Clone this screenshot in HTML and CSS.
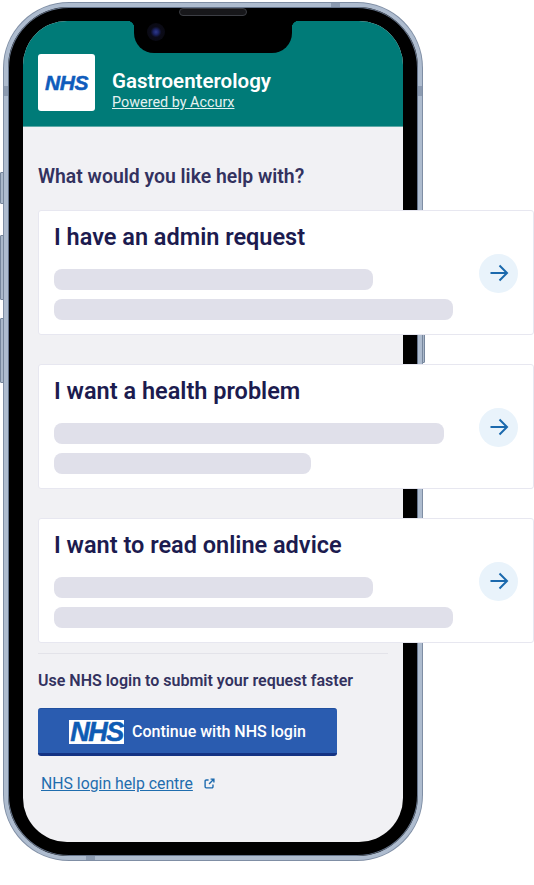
FILE: index.html
```html
<!DOCTYPE html>
<html lang="en">
<head>
  <meta charset="UTF-8">
  <meta name="viewport" content="width=device-width, initial-scale=1.0">
  <title>Gastroenterology</title>
  <link rel="stylesheet" href="styles.css">
</head>
<body>
  <div class="phone">
    <span class="side-btn mute"></span>
    <span class="side-btn vol-up"></span>
    <span class="side-btn vol-down"></span>
    <span class="side-btn power"></span>
    <span class="band band-top"></span>
    <span class="band band-bottom"></span>
    <span class="band band-left"></span>
    <span class="band band-right"></span>
    <span class="speaker"></span>
    <div class="notch"><span class="camera"></span></div>

    <div class="screen">
      <header class="top">
        <div class="logo-box"><span class="nhs-word">NHS</span></div>
        <div class="top-text">
          <h1>Gastroenterology</h1>
          <a class="powered" href="#">Powered by Accurx</a>
        </div>
      </header>

      <main class="content">
        <h2>What would you like help with?</h2>

        <div class="card">
          <div class="card-body">
            <h3>I have an admin request</h3>
            <div class="bar w320"></div>
            <div class="bar w400"></div>
          </div>
          <span class="go">
            <svg viewBox="0 0 20 20" width="20" height="20"><path d="M1.5 10H18M10.5 2.5 18 10l-7.5 7.5" fill="none" stroke="#1b69ad" stroke-width="2"/></svg>
          </span>
        </div>

        <div class="card">
          <div class="card-body">
            <h3>I want a health problem</h3>
            <div class="bar w391"></div>
            <div class="bar w258"></div>
          </div>
          <span class="go">
            <svg viewBox="0 0 20 20" width="20" height="20"><path d="M1.5 10H18M10.5 2.5 18 10l-7.5 7.5" fill="none" stroke="#1b69ad" stroke-width="2"/></svg>
          </span>
        </div>

        <div class="card">
          <div class="card-body">
            <h3>I want to read online advice</h3>
            <div class="bar w320"></div>
            <div class="bar w400"></div>
          </div>
          <span class="go">
            <svg viewBox="0 0 20 20" width="20" height="20"><path d="M1.5 10H18M10.5 2.5 18 10l-7.5 7.5" fill="none" stroke="#1b69ad" stroke-width="2"/></svg>
          </span>
        </div>

        <div class="login">
          <p class="login-text">Use NHS login to submit your request faster</p>
          <button class="login-btn"><span class="btn-logo">NHS</span>Continue with NHS login</button>
          <a class="help" href="#">NHS login help centre</a>
          <svg class="ext" viewBox="0 0 12 12" width="11" height="11"><path d="M5 2.2H2.4A1.2 1.2 0 0 0 1.2 3.4v6.2a1.2 1.2 0 0 0 1.2 1.2h6.2a1.2 1.2 0 0 0 1.2-1.2V7.2M5.5 6.5 10.6 1.4M7.2 1.2h3.6v3.6" fill="none" stroke="#1b69ad" stroke-width="1.5"/></svg>
        </div>
      </main>
    </div>
  </div>
</body>
</html>
```

FILE: styles.css
```css
html, body {
  margin: 0;
  padding: 0;
  background-color: white;
}
body {
  width: 534px;
  height: 885px;
  overflow: hidden;
  font-family: 'Roboto', 'Liberation Sans', sans-serif;
}
.phone {
  position: relative;
  box-sizing: border-box;
  width: 418px;
  height: 857px;
  margin: 3px 0 0 4px;
  padding: 14px 15px;
  background-color: #000;
  border: 4px solid #aebccf;
  border-radius: 65px;
  box-shadow: inset 0 0 0 1px #66758c, 0 0 0 1px #7f8ea4;
}

/* hardware bits */
.side-btn {
  position: absolute;
  left: -8px;
  width: 4px;
  box-sizing: border-box;
  background-color: #aab8ca;
  border: 1px solid #77879d;
  border-radius: 1px 0 0 1px;
}
.mute { top: 165px; height: 32px; }
.vol-up { top: 228px; height: 65px; }
.vol-down { top: 311px; height: 65px; }
.power {
  left: auto;
  right: -7px;
  top: 240px;
  width: 3px;
  height: 116px;
  border-radius: 0 1px 1px 0;
}
.band {
  position: absolute;
  background-color: #8c9bb1;
}
.band-top { top: -4px; left: 323px; width: 9px; height: 4px; }
.band-bottom { bottom: -4px; left: 78px; width: 9px; height: 4px; }
.band-left { left: -4px; top: 79px; width: 4px; height: 10px; }
.band-right { right: -4px; top: 79px; width: 4px; height: 10px; }
.speaker {
  position: absolute;
  top: 1px;
  left: 171px;
  width: 68px;
  height: 8px;
  background-color: #17171a;
  border: 1px solid #3c3e44;
  box-sizing: border-box;
  border-radius: 4px;
  z-index: 3;
}
.notch {
  position: absolute;
  top: 14px;
  left: 126px;
  width: 158px;
  height: 32px;
  background-color: #000;
  border-radius: 0 0 20px 20px;
  z-index: 2;
}
.notch::before, .notch::after {
  content: "";
  position: absolute;
  top: 0;
  width: 7px;
  height: 7px;
}
.notch::before {
  left: -7px;
  background: radial-gradient(circle at 0 100%, transparent 7px, #000 7.5px);
}
.notch::after {
  right: -7px;
  background: radial-gradient(circle at 100% 100%, transparent 7px, #000 7.5px);
}
.camera {
  position: absolute;
  top: 2px;
  left: 13px;
  width: 18px;
  height: 18px;
  border-radius: 50%;
  background: radial-gradient(circle, #2f3a8c 0, #1c2466 20%, #0b0b18 42%, #08080e 100%);
}

.screen {
  position: relative;
  z-index: 1;
  height: 821px;
  width: 380px;
  background-color: #f1f1f4;
  border-radius: 44px;
}
.top {
  box-sizing: border-box;
  height: 105.5px;
  padding: 33px 15px 0;
  display: flex;
  align-items: flex-start;
  gap: 17px;
  background-color: #007b78;
  border-bottom: 1px solid #5fa9a7;
  border-radius: 44px 44px 0 0;
}
.logo-box {
  width: 57px;
  height: 57px;
  background-color: white;
  border-radius: 3px;
  display: flex;
  align-items: center;
  justify-content: center;
  flex: none;
}
.nhs-word {
  font-family: 'Liberation Sans', sans-serif;
  font-weight: bold;
  font-style: italic;
  font-size: 21px;
  letter-spacing: -0.5px;
  color: #0f5cbc;
  -webkit-text-stroke: 0.5px #0f5cbc;
}
.top-text {
  padding-top: 14px;
}
h1 {
  margin: 0;
  font-size: 20.5px;
  line-height: 26px;
  font-weight: 600;
  color: white;
}
.powered {
  display: block;
  font-size: 14.4px;
  line-height: 17px;
  color: #e4f1f0;
}

.content {
  padding: 38px 15px 0;
}
h2 {
  margin: 0 0 21px;
  font-size: 19.4px;
  line-height: 24px;
  font-weight: 600;
  color: #33325f;
}
.card {
  box-sizing: border-box;
  width: 496px;
  height: 125px;
  margin-bottom: 29px;
  padding: 0 15px;
  display: flex;
  align-items: flex-start;
  justify-content: space-between;
  background-color: white;
  border: 1px solid #e7e7f0;
  border-radius: 3px;
}
.card:nth-of-type(3) {
  margin-bottom: 10px;
}
.card-body {
  flex: 1;
}
h3 {
  margin: 12px 0 18px;
  font-size: 23.5px;
  line-height: 28px;
  font-weight: 600;
  color: #1c1b4f;
}
.bar {
  height: 21px;
  margin-bottom: 9px;
  background-color: #e0e0ea;
  border-radius: 8px;
}
.w320 { width: 319px; }
.w400 { width: 399px; }
.w391 { width: 390px; }
.w258 { width: 257px; }
.go {
  flex: none;
  width: 39px;
  height: 39px;
  margin-top: 43px;
  border-radius: 50%;
  background-color: #e9f3fb;
  display: flex;
  align-items: center;
  justify-content: center;
}

.login {
  width: 350px;
  border-top: 1px solid #e3e3e9;
}
.login-text {
  margin: 17px 0 17px;
  font-size: 16px;
  line-height: 20px;
  font-weight: 600;
  color: #33325f;
}
.login-btn {
  display: flex;
  align-items: center;
  box-sizing: border-box;
  width: 299px;
  height: 48px;
  margin-bottom: 18px;
  padding: 2px 0 0 31px;
  gap: 8px;
  background-color: #2a5cb0;
  border: none;
  border-top: 1px solid #21509f;
  border-bottom: 3px solid #143383;
  border-radius: 3px;
  color: white;
  font-family: inherit;
  font-size: 16px;
  font-weight: 500;
}
.btn-logo {
  width: 55px;
  height: 24px;
  line-height: 24px;
  background-color: white;
  color: #0f5cb4;
  text-align: center;
  font-family: 'Liberation Sans', sans-serif;
  font-size: 27px;
  font-weight: bold;
  font-style: italic;
  letter-spacing: -1.5px;
  -webkit-text-stroke: 0.5px #0f5cb4;
}
.help {
  margin-left: 3px;
  font-size: 15.8px;
  line-height: 20px;
  color: #1f6dae;
}
.ext {
  margin-left: 7px;
  vertical-align: 0;
}
```
